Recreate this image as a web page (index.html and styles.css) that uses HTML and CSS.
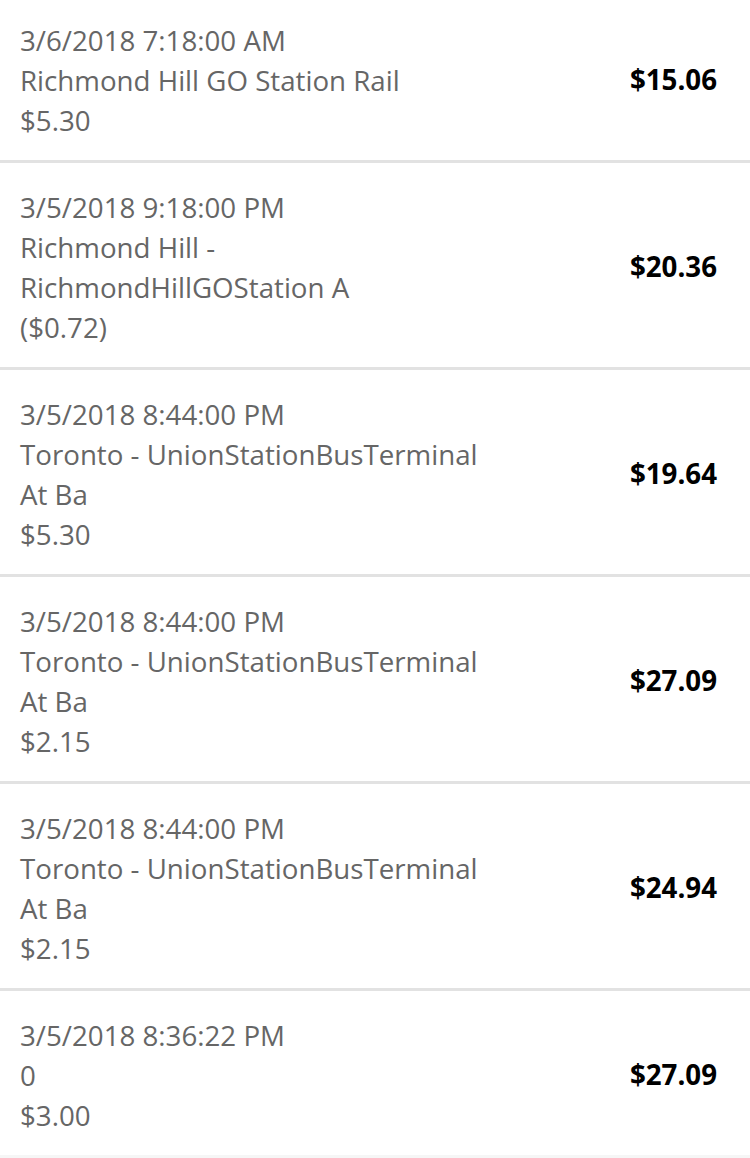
FILE: index.html
```html
<!DOCTYPE html>
<html>
<head>
<meta charset="utf-8">
<link rel="stylesheet" href="styles.css">
</head>
<body>
<ul class="list">
  <li class="row">
    <div class="info"><div>3/6/2018 7:18:00 AM</div><div>Richmond Hill GO Station Rail</div><div>$5.30</div></div>
    <div class="amount">$15.06</div>
  </li>
  <li class="row">
    <div class="info"><div>3/5/2018 9:18:00 PM</div><div>Richmond Hill - RichmondHillGOStation A</div><div>($0.72)</div></div>
    <div class="amount">$20.36</div>
  </li>
  <li class="row">
    <div class="info"><div>3/5/2018 8:44:00 PM</div><div>Toronto - UnionStationBusTerminal At Ba</div><div>$5.30</div></div>
    <div class="amount">$19.64</div>
  </li>
  <li class="row">
    <div class="info"><div>3/5/2018 8:44:00 PM</div><div>Toronto - UnionStationBusTerminal At Ba</div><div>$2.15</div></div>
    <div class="amount">$27.09</div>
  </li>
  <li class="row">
    <div class="info"><div>3/5/2018 8:44:00 PM</div><div>Toronto - UnionStationBusTerminal At Ba</div><div>$2.15</div></div>
    <div class="amount">$24.94</div>
  </li>
  <li class="row">
    <div class="info"><div>3/5/2018 8:36:22 PM</div><div>0</div><div>$3.00</div></div>
    <div class="amount">$27.09</div>
  </li>
</ul>
</body>
</html>
```
FILE: styles.css
```css
html, body {
  margin: 0;
  padding: 0;
  background: #f6f6f6;
}
body {
  font-family: "Open Sans", sans-serif;
  width: 750px;
  height: 1158px;
  overflow: hidden;
}
.list {
  list-style: none;
  margin: 0;
  padding: 0;
  background: #ffffff;
}
.row {
  display: flex;
  align-items: center;
  justify-content: space-between;
  padding: 22px 33px 20px 20px;
  border-bottom: 3px solid #e2e2e2;
}
.row:first-child {
  padding-top: 18px;
}
.row:last-child {
  border-bottom: none;
}
.info {
  max-width: 480px;
  padding-top: 2px;
  font-size: 27.7px;
  line-height: 40px;
  color: #666666;
}
.amount {
  font-size: 27.7px;
  font-weight: 700;
  color: #000000;
}
```
